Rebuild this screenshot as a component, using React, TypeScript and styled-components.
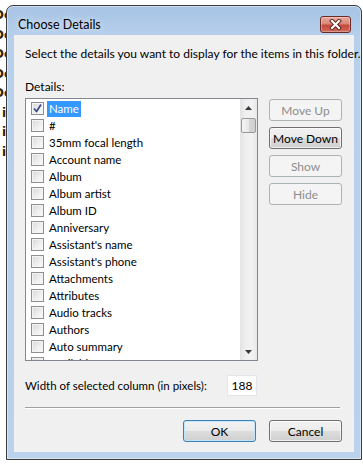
import React, { FC } from 'react';
import styled, { createGlobalStyle } from 'styled-components';

const GlobalStyle = createGlobalStyle`
  html, body {
    margin: 0;
    padding: 0;
    background: #fff;
  }
  body {
    font-family: Lato, "Noto Sans", sans-serif;
    font-size: 12px;
    color: #000;
  }
`;

const Desktop = styled.div`
  display: flex;
  width: 363px;
  height: 465px;
  overflow: hidden;
  background: #fff;
`;

const Backdrop = styled.div`
  flex: none;
  width: 6px;
  overflow: hidden;
  padding-top: 6px;
  font: bold 12px "DejaVu Sans", sans-serif;
  color: #3d2200;
`;

const BackdropLine = styled.div<{ $offset: number }>`
  height: 19.5px;
  line-height: 19.5px;
  white-space: nowrap;
  margin-left: ${(p) => p.$offset}px;
`;

const Window = styled.div`
  flex: none;
  margin-top: 5px;
  width: 356px;
  height: 455px;
  box-sizing: border-box;
  border: 1px solid #3b3b3b;
  border-radius: 7px 7px 0 0;
  background: linear-gradient(180deg, #a7c3e4 0, #b6cfeb 30px, #bad2ec 100%);
  box-shadow: inset 0 0 0 1px rgba(255, 255, 255, 0.45);
  padding: 0 7px 7px 7px;
  display: flex;
  flex-direction: column;
`;

const TitleBar = styled.div`
  height: 29px;
  box-sizing: border-box;
  padding: 7px 3px 0 4px;
  display: flex;
  align-items: center;
`;

const Title = styled.div`
  font-size: 12.5px;
  color: #000;
  text-shadow: 0 0 6px rgba(255, 255, 255, 0.9);
`;

const CloseButton = styled.div`
  margin-left: auto;
  width: 31px;
  height: 17px;
  box-sizing: border-box;
  border: 1px solid #6b2a24;
  border-radius: 3px;
  background: linear-gradient(180deg, #e8a89c 0, #d9877a 45%, #c5493b 55%, #cf6b5c 100%);
  box-shadow: inset 0 0 0 1px rgba(255, 255, 255, 0.3);
  display: flex;
  align-items: center;
  justify-content: center;
`;

const Body = styled.div`
  flex: 1;
  background: #f0f0f0;
  padding: 11px 11px 0 11px;
  display: flex;
  flex-direction: column;
`;

const Text = styled.div<{ $compact?: boolean }>`
  line-height: 15px;
  white-space: nowrap;
  font-size: ${(p) => (p.$compact ? '11.5px' : '12px')};
`;

const Label = styled(Text)`
  margin-top: 18px;
`;

const Main = styled.div`
  margin-top: 4px;
  display: flex;
  align-items: flex-start;
`;

const ListBox = styled.div`
  width: 233px;
  height: 263px;
  box-sizing: border-box;
  border: 1px solid #828790;
  background: #fff;
  display: flex;
`;

const Items = styled.div`
  flex: 1;
  overflow: hidden;
  padding: 1px 0 0 5px;
`;

const Item = styled.div`
  display: flex;
  align-items: center;
  height: 17px;
`;

const Check = styled.span`
  flex: none;
  width: 13px;
  height: 13px;
  box-sizing: border-box;
  border: 1px solid #8f8f8f;
  background: linear-gradient(135deg, #d8d8d8 0, #f0f0f0 60%, #fbfbfb 100%);
  box-shadow: inset 0 0 0 1px #f4f4f4;
  display: flex;
  align-items: center;
  justify-content: center;
`;

const ItemLabel = styled.span<{ $selected?: boolean }>`
  margin-left: 3px;
  padding: 0 2px;
  font-size: 11.5px;
  line-height: 16px;
  white-space: nowrap;
  background: ${(p) => (p.$selected ? '#3399ff' : 'transparent')};
  color: ${(p) => (p.$selected ? '#fff' : '#000')};
`;

const ScrollBar = styled.div`
  flex: none;
  width: 17px;
  display: flex;
  flex-direction: column;
  background: linear-gradient(90deg, #e3e3e3 0, #eeeeee 30%, #f2f2f2 70%, #e8e8e8 100%);
`;

const ScrollArrow = styled.div`
  height: 17px;
  display: flex;
  align-items: center;
  justify-content: center;
`;

const Thumb = styled.div`
  margin: 2px 1px 0 1px;
  height: 15px;
  box-sizing: border-box;
  border: 1px solid #999;
  border-radius: 2px;
  background: linear-gradient(90deg, #f4f4f4 0, #e8e8e8 50%, #d6d6d6 51%, #cfcfcf 100%);
`;

const Track = styled.div`
  flex: 1;
`;

const SideButtons = styled.div`
  margin-left: 11px;
  padding-top: 1px;
  display: flex;
  flex-direction: column;
  gap: 6px;
`;

const Button = styled.button<{ $default?: boolean }>`
  width: 73px;
  height: 22px;
  box-sizing: border-box;
  padding: 0;
  font-family: Lato, "Noto Sans", sans-serif;
  font-size: 12px;
  color: #000;
  border: 1px solid ${(p) => (p.$default ? '#3c7fb1' : '#707070')};
  border-radius: 3px;
  background: linear-gradient(180deg, #f2f2f2 0, #ebebeb 50%, #dddddd 51%, #cfcfcf 100%);
  box-shadow: inset 0 0 0 1px ${(p) => (p.$default ? 'rgba(190, 230, 253, 0.9)' : 'rgba(255, 255, 255, 0.7)')};

  &:disabled {
    color: #8d8d8d;
    border-color: #adb2b5;
    background: #f4f4f4;
    box-shadow: none;
  }
`;

const WidthRow = styled.div`
  margin-top: 14px;
  width: 233px;
  display: flex;
  align-items: center;
  justify-content: space-between;
`;

const NumberBox = styled.div`
  margin-right: 1px;
  width: 30px;
  height: 21px;
  box-sizing: border-box;
  border: 1px solid #e2e6ea;
  background: #fff;
  display: flex;
  align-items: center;
  justify-content: center;
`;

const Separator = styled.div`
  margin-top: 11px;
  width: 315px;
  height: 1px;
  background: #a0a0a0;
  border-bottom: 1px solid #fff;
`;

const Footer = styled.div`
  margin-top: 11px;
  padding-right: 1px;
  display: flex;
  justify-content: flex-end;
  gap: 13px;
`;

const CheckMark: FC = () => (
  <svg width="11" height="11" viewBox="0 0 11 11">
    <path d="M2 5.5 L4.5 8.5 L9 1.5" fill="none" stroke="#3a4f8c" strokeWidth="1.8" strokeLinejoin="round" />
  </svg>
);

const CloseGlyph: FC = () => (
  <svg width="13" height="11" viewBox="0 0 13 11">
    <path d="M3 2 L10 9 M10 2 L3 9" stroke="#5c1d16" strokeWidth="4" strokeLinecap="square" />
    <path d="M3 2 L10 9 M10 2 L3 9" stroke="#fff" strokeWidth="2.2" strokeLinecap="square" />
  </svg>
);

const Arrow: FC<{ down?: boolean }> = ({ down }) => (
  <svg width="7" height="4" viewBox="0 0 7 4">
    <polygon points={down ? '0,0 7,0 3.5,4' : '3.5,0 7,4 0,4'} fill="#3a3a3a" />
  </svg>
);

const fields = [
  'Name',
  '#',
  '35mm focal length',
  'Account name',
  'Album',
  'Album artist',
  'Album ID',
  'Anniversary',
  "Assistant's name",
  "Assistant's phone",
  'Attachments',
  'Attributes',
  'Audio tracks',
  'Authors',
  'Auto summary',
  'Available',
];

const backdropLines = [
  { text: 'De', offset: -6 },
  { text: 'De', offset: -6 },
  { text: 'De', offset: -6 },
  { text: 'De', offset: -6 },
  { text: 'De', offset: -6 },
  { text: 'i', offset: 2 },
  { text: 'i', offset: 2 },
  { text: 'i', offset: 2 },
];

const App: FC = () => {
  return (
    <>
      <GlobalStyle />
      <Desktop>
        <Backdrop>
          {backdropLines.map((l, i) => (
            <BackdropLine key={i} $offset={l.offset}>
              {l.text}
            </BackdropLine>
          ))}
        </Backdrop>
        <Window>
          <TitleBar>
            <Title>Choose Details</Title>
            <CloseButton>
              <CloseGlyph />
            </CloseButton>
          </TitleBar>
          <Body>
            <Text>Select the details you want to display for the items in this folder.</Text>
            <Label>Details:</Label>
            <Main>
              <ListBox>
                <Items>
                  {fields.map((f, i) => (
                    <Item key={f}>
                      <Check>{i === 0 && <CheckMark />}</Check>
                      <ItemLabel $selected={i === 0}>{f}</ItemLabel>
                    </Item>
                  ))}
                </Items>
                <ScrollBar>
                  <ScrollArrow>
                    <Arrow />
                  </ScrollArrow>
                  <Thumb />
                  <Track />
                  <ScrollArrow>
                    <Arrow down />
                  </ScrollArrow>
                </ScrollBar>
              </ListBox>
              <SideButtons>
                <Button disabled>Move Up</Button>
                <Button>Move Down</Button>
                <Button disabled>Show</Button>
                <Button disabled>Hide</Button>
              </SideButtons>
            </Main>
            <WidthRow>
              <Text $compact>Width of selected column (in pixels):</Text>
              <NumberBox>188</NumberBox>
            </WidthRow>
            <Separator />
            <Footer>
              <Button $default>OK</Button>
              <Button>Cancel</Button>
            </Footer>
          </Body>
        </Window>
      </Desktop>
    </>
  );
};

export default App;
